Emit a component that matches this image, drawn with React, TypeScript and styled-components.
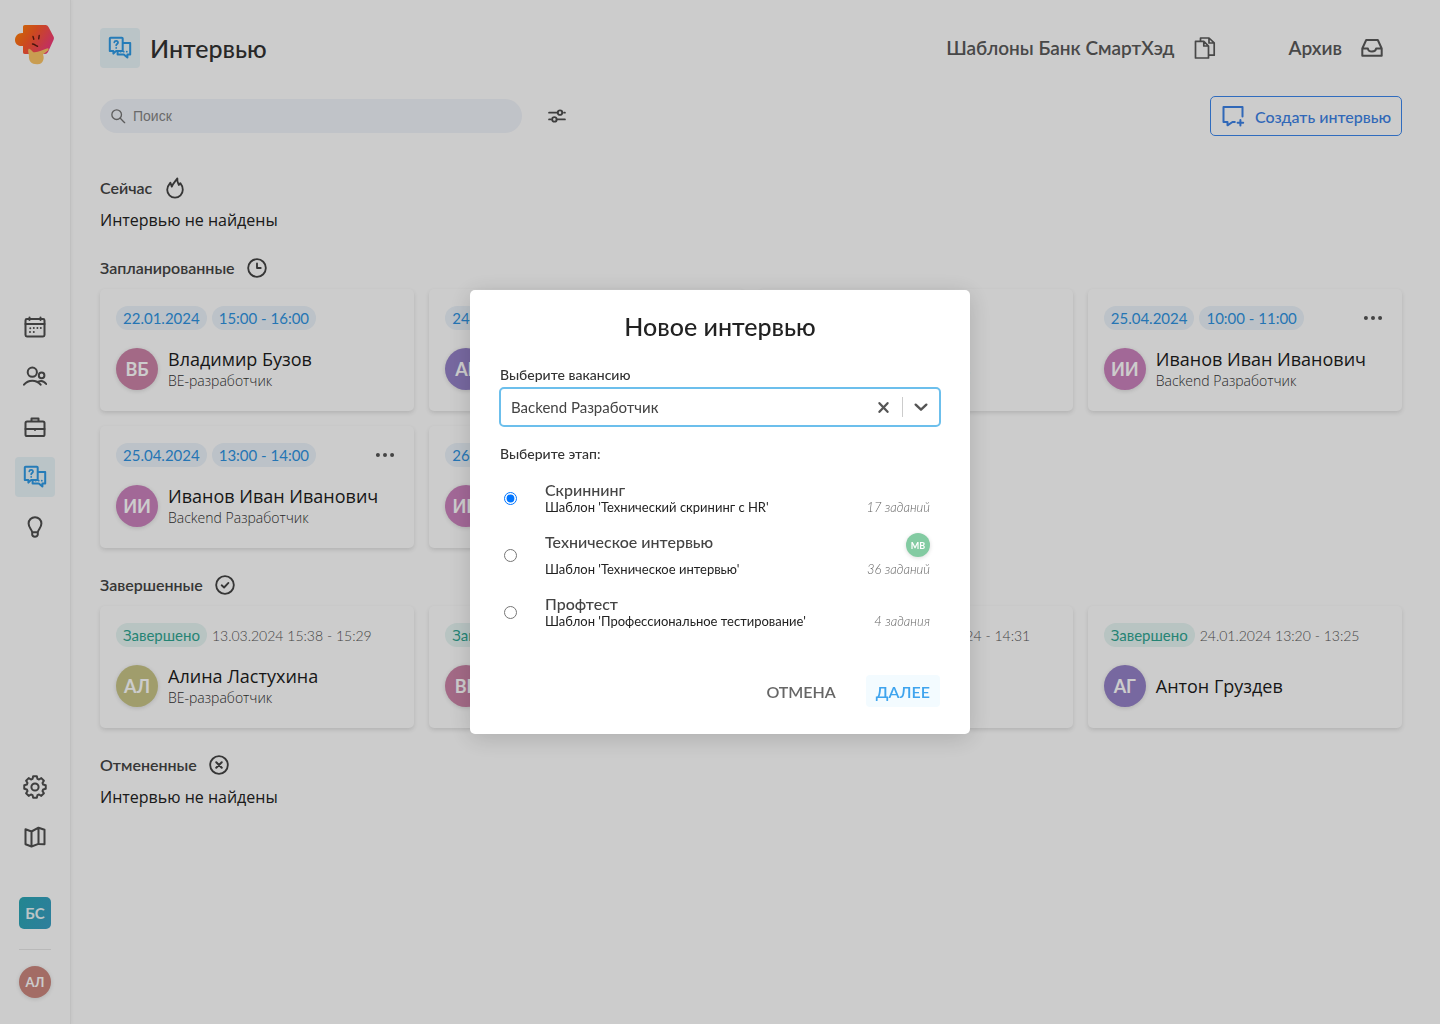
import React from "react";
import styled, { createGlobalStyle } from "styled-components";

const display = '"Lato", "Open Sans", sans-serif';
const text = '"Open Sans", "Noto Sans", sans-serif';

const GlobalStyle = createGlobalStyle`
  *, *::before, *::after { box-sizing: border-box; }
  body { margin: 0; background: #fff; color: #222; font-family: ${display}; }
  button, input, select { font: inherit; color: inherit; }
  button { cursor: pointer; border: 0; background: none; padding: 0; }
  a { color: inherit; text-decoration: none; }
  h1, h2, p { margin: 0; }
  ul { list-style: none; margin: 0; padding: 0; }
`;

/* ---------- icons ---------- */

const Svg = styled.svg<{ $size?: number }>`
  display: block;
  flex: none;
  width: ${(p) => p.$size ?? 24}px;
  height: ${(p) => p.$size ?? 24}px;
  fill: none;
  stroke: currentColor;
  stroke-width: 2;
  stroke-linecap: round;
  stroke-linejoin: round;
`;

type IconProps = { size?: number };

const icon = (children: React.ReactNode) =>
  function Icon({ size }: IconProps) {
    return (
      <Svg viewBox="0 0 24 24" $size={size} aria-hidden="true">
        {children}
      </Svg>
    );
  };

const ChatIcon = icon(
  <>
    <path d="M2.600 1.800h11.300a.8.8 0 0 1 .8.8v12.300H8.200L5.400 17.600v-2.700H1.800V2.600a.8.8 0 0 1 .8-.8z" />
    <path d="M15 7h7.200v11.600h-2.800v3l-3.600-3H9.600v-3" />
    <path d="M6.300 6.300c.3-2.100 3.900-1.900 3.700.3-.1 1.300-1.800 1.400-1.800 2.700" strokeWidth="1.800" />
    <path d="M8.200 11.800v.1M12.600 15.600v.1M15.700 15.600v.1M18.800 15.600v.1" strokeWidth="1.800" />
  </>
);
const CalendarIcon = icon(
  <>
    <rect x="2.500" y="4" width="19" height="17.500" rx="1.400" />
    <path d="M2.500 9h19M6.500 2.500V5M17.500 2.500V5" />
    <path d="M10.800 13v.1M14.400 13v.1M17.800 13v.1M7 17v.1M10.800 17v.1M7.300 13.200v.1" />
  </>
);
const UsersIcon = icon(
  <>
    <circle cx="9.300" cy="7.200" r="4.600" />
    <circle cx="18.600" cy="10.400" r="2.800" />
    <path d="M1 19.600c4.200-5.200 12.400-5.200 16.600 0M15.400 16.600c3-1.400 5.800-.4 7.800 2.400" />
  </>
);
const BriefcaseIcon = icon(
  <>
    <rect x="2.500" y="6.500" width="19" height="14.500" rx="1.600" />
    <path d="M8.500 6V3.600h7V6M2.500 14h19M12 14v1" />
  </>
);
const BulbIcon = icon(
  <path d="M9.200 17.200C8.600 14.400 5.600 12.600 5.600 8.600a6.400 6.400 0 0 1 12.800 0c0 4-3 5.800-3.600 8.600zM9.200 17.200v2.400c0 2.800 5.600 2.800 5.600 0v-2.400" />
);
const MapIcon = icon(
  <path d="M2.500 4.300l6 2.200v15l-6-2.200zM8.500 21.500l7-2.600M8.500 6.500l7-3.800v16.200M15.500 2.700l6 2v14.600l-6-.4" />
);

const gearPath = (() => {
  const points: string[] = [];
  for (let i = 0; i < 8; i++) {
    const base = (i * Math.PI) / 4;
    [
      [-0.29, 8.5],
      [-0.17, 10.9],
      [0.17, 10.9],
      [0.29, 8.5],
    ].forEach(([a, r]) =>
      points.push(`${(12 + r * Math.sin(base + a)).toFixed(2)} ${(12 - r * Math.cos(base + a)).toFixed(2)}`)
    );
  }
  return `M${points.join("L")}Z`;
})();

const GearIcon = icon(
  <>
    <path d={gearPath} />
    <circle cx="12" cy="12" r="3.600" />
  </>
);
const DocsIcon = icon(
  <g strokeWidth="1.700">
    <path d="M2.500 5.300h8.300l4.700 4.700v12h-13zM10.800 5.500V10h4.500" />
    <path d="M7.500 5V2h8.500l5.200 4.800v12.400H16M16 2.200V7h5" />
  </g>
);
const InboxIcon = icon(
  <path d="M6.200 4h11.600l3.900 8.500v7.200H2.300v-7.200zM2.300 12.500h5.600c.4 4 7.800 4 8.200 0h5.600" />
);
const NewChatIcon = icon(
  <path d="M21.500 12.500V3h-19v15h4v3.300l5-3.300h2.300M19.400 16v5.600M16.600 18.800h5.600" />
);
const SearchIcon = icon(
  <>
    <circle cx="10" cy="10" r="7.200" />
    <path d="M15.400 15.400L22 22" />
  </>
);
const SlidersIcon = icon(
  <g strokeWidth="2.600">
    <path d="M1.500 7.500h11M21.500 7.500h1M1.500 16.500h2M12.500 16.500h10" />
    <circle cx="16" cy="7.500" r="3" />
    <circle cx="8.500" cy="16.500" r="3" />
  </g>
);
const FlameIcon = icon(
  <path d="M14.600 1.500c-.6 3.400.6 4.900 1.600 7.200l1.600-2c1.900 2.300 2.700 4.500 2.700 7.300a8.500 8.500 0 0 1-17 0c0-3.200 1.600-5.500 3.500-7.800l1.500 4.300c1.200-3.400 3.600-5.500 6.100-9z" />
);
const ClockIcon = icon(
  <>
    <circle cx="12" cy="12" r="10.600" strokeWidth="2.200" />
    <path d="M12 6.500V12h4.500" strokeWidth="2.200" />
  </>
);
const CheckIcon = icon(
  <>
    <circle cx="12" cy="12" r="10.600" strokeWidth="2.200" />
    <path d="M8 12.300l2.900 2.700 5.200-5.500" strokeWidth="2.200" />
  </>
);
const CrossCircleIcon = icon(
  <>
    <circle cx="12" cy="12" r="10.600" strokeWidth="2.200" />
    <path d="M8.700 8.700l6.600 6.600M15.300 8.700l-6.600 6.600" strokeWidth="2.400" />
  </>
);
const DotsIcon = icon(<path d="M3.500 12v.01M12 12v.01M20.500 12v.01" strokeWidth="4.800" />);
const CloseIcon = icon(<path d="M4.500 4l15 16M19.500 4l-15 16" strokeWidth="4.200" />);
const ChevronIcon = icon(<path d="M4 8.500l8 7.500 8-7.500" strokeWidth="3.600" />);

function Logo() {
  return (
    <svg width="40" height="42" viewBox="0 0 40 42" role="img" aria-label="СмартХэд">
      <defs>
        <linearGradient id="logoBody" x1="0" y1="0" x2="1" y2="0.500">
          <stop offset="0" stopColor="#ff8a00" />
          <stop offset="0.500" stopColor="#ff5b28" />
          <stop offset="1" stopColor="#f23c78" />
        </linearGradient>
      </defs>
      <path
        d="M10 1h20.500c1.500 0 2.200.8 3 2l5 9.500c.6 1.200.6 2.200 0 3.400L33 28c-.8 1.300-1.500 2-3 2H10c-1.600 0-2-.8-2-2.200V22C3.200 22.500 0 20 0 16s3.200-7.500 8-7V3c0-1.300.6-2 2-2z"
        fill="url(#logoBody)"
      />
      <path
        d="M13.500 25c1.500-1 3 2 5 3.200 4.500.6 9-2.600 14-4 1.500 0 1.400 1.800.2 2.600L28 30.500c1.600 3.500.6 9.500-5.500 9.800-6 .2-9-2.800-8.600-9-.5-2-1.200-5.200-.4-6.300z"
        fill="#fcc566"
      />
      <path d="M18 12.500l.8 2.800M24.200 11.500l-.5 3.300M17.500 20c2-.1 3.200 2 5 2.300" fill="none" stroke="#5c1c10" strokeWidth="1.400" strokeLinecap="round" />
    </svg>
  );
}

/* ---------- page frame ---------- */

const Page = styled.div`
  display: flex;
  min-height: 100vh;
`;

const Sidebar = styled.aside`
  display: flex;
  flex-direction: column;
  align-items: center;
  justify-content: space-between;
  flex: none;
  width: 71px;
  height: 100vh;
  padding: 24px 0 26px;
  border-right: 1px solid #f0f0f0;
  box-shadow: 1px 0 3px rgba(0, 0, 0, 0.04);
`;

const LogoLink = styled.a`
  height: 62px;
`;

const NavList = styled.ul`
  display: flex;
  flex-direction: column;
  gap: 10px;
`;

const IconTile = styled.a<{ $active?: boolean }>`
  display: grid;
  place-items: center;
  width: 40px;
  height: 40px;
  border-radius: 4px;
  color: ${(p) => (p.$active ? "#2f9be6" : "#4f4f4f")};
  background: ${(p) => (p.$active ? "#e9f5f9" : "transparent")};
`;

const SidebarFoot = styled.div`
  display: flex;
  flex-direction: column;
  align-items: center;
`;

const Company = styled.button`
  width: 32px;
  height: 32px;
  margin: 40px 0 20px;
  border-radius: 5px;
  background: linear-gradient(110deg, #2ba8b5, #3a9fc4);
  color: #eaf6f8;
  font-size: 15px;
  font-weight: 700;
`;

const Divider = styled.hr`
  width: 32px;
  height: 1px;
  margin: 0 0 16px;
  border: 0;
  background: #e8e8e8;
`;

const Main = styled.main`
  flex: 1;
  min-width: 0;
  padding: 28px 38px 28px 29px;
`;

const Header = styled.header`
  display: flex;
  align-items: center;
  gap: 10px;
`;

const PageTitle = styled.h1`
  flex: 1;
  font-size: 25px;
  line-height: 40px;
  font-weight: 500;
  color: #333;
`;

const HeaderLink = styled.a`
  display: flex;
  align-items: center;
  gap: 18px;
  margin-right: 18px;
  font-size: 19px;
  line-height: 24px;
  font-weight: 600;
  color: #5a5a5a;

  & + & {
    margin-left: 44px;
  }
`;

const Toolbar = styled.div`
  display: flex;
  align-items: center;
  gap: 26px;
  margin: 28px 0 40px;
`;

const Search = styled.label`
  display: flex;
  align-items: center;
  gap: 5px;
  width: 422px;
  height: 34px;
  padding: 0 10px;
  border-radius: 17px;
  background: #f1f4fa;
  color: #757575;
`;

const SearchInput = styled.input`
  flex: 1;
  min-width: 0;
  border: 0;
  outline: 0;
  background: none;
  font-family: "Liberation Sans", Arial, sans-serif;
  font-size: 14px;

  &::placeholder {
    color: #858585;
  }
`;

const FilterButton = styled.button`
  color: #4f4f4f;
`;

const CreateButton = styled.button`
  display: flex;
  align-items: center;
  gap: 10px;
  height: 40px;
  margin-left: auto;
  padding: 0 10px;
  border: 1px solid #3d88ee;
  border-radius: 5px;
  color: #3d82e6;
  font-size: 16px;
  font-weight: 500;
`;

/* ---------- interview sections ---------- */

const Section = styled.section`
  & + & {
    margin-top: 25px;
  }
`;

const SectionTitle = styled.h2`
  display: flex;
  align-items: center;
  gap: 12px;
  margin-bottom: 9px;
  font-size: 16px;
  line-height: 24px;
  font-weight: 600;
  color: #444;
`;

const Empty = styled.p`
  font-family: ${text};
  font-size: 16px;
  line-height: 22px;
`;

const Grid = styled.ul`
  display: grid;
  grid-template-columns: repeat(4, minmax(0, 1fr));
  gap: 15px;
`;

const Card = styled.li`
  height: 122px;
  padding: 17px 16px;
  border-radius: 5px;
  box-shadow: 0 2px 4px rgba(0, 0, 0, 0.12);
`;

const CardTop = styled.div`
  display: flex;
  align-items: center;
  gap: 5px;
  height: 24px;
`;

const Pill = styled.span<{ $done?: boolean }>`
  padding: 0 7px;
  border-radius: 12px;
  font-size: 15px;
  line-height: 24px;
  white-space: nowrap;
  color: ${(p) => (p.$done ? "#2fa592" : "#2f93e2")};
  background: ${(p) => (p.$done ? "#e6f5f3" : "#ebf3fa")};
`;

const DoneTime = styled.span`
  font-size: 14px;
  font-weight: 300;
  white-space: nowrap;
  color: #555;
`;

const MenuButton = styled.button`
  margin-left: auto;
  padding-right: 3px;
  color: #555;
`;

const Person = styled.div`
  display: flex;
  align-items: center;
  gap: 10px;
  height: 44px;
  margin-top: 17px;
`;

const Avatar = styled.span<{ $color: string; $size: number; $font: number }>`
  display: grid;
  place-items: center;
  flex: none;
  width: ${(p) => p.$size}px;
  height: ${(p) => p.$size}px;
  border-radius: 50%;
  background: ${(p) => p.$color};
  box-shadow: 0 1px 4px rgba(0, 0, 0, 0.14);
  color: #fff;
  font-size: ${(p) => p.$font}px;
  font-weight: 700;
`;

const PersonText = styled.div`
  min-width: 0;
  font-family: ${text};
  white-space: nowrap;
`;

const PersonName = styled.p`
  font-size: 18px;
  line-height: 24px;
  color: #1c1c1c;
`;

const PersonRole = styled.p`
  font-size: 14px;
  line-height: 20px;
  font-weight: 300;
  color: #333;
`;

/* ---------- dialog ---------- */

const Backdrop = styled.div`
  position: fixed;
  inset: 0;
  display: grid;
  place-items: center;
  background: rgba(0, 0, 0, 0.2);
`;

const Dialog = styled.form`
  width: 500px;
  max-width: 100%;
  padding: 20px 30px 27px;
  border-radius: 5px;
  background: #fff;
  box-shadow: 0 4px 24px rgba(0, 0, 0, 0.16);
`;

const DialogTitle = styled.h2`
  margin-bottom: 24px;
  font-size: 25px;
  line-height: 32px;
  font-weight: 500;
  text-align: center;
  color: #222;
`;

const FieldLabel = styled.label`
  display: block;
  font-size: 14px;
  line-height: 18px;
  font-weight: 500;
  color: #333;
`;

const SelectBox = styled.div`
  display: flex;
  align-items: center;
  height: 40px;
  margin: 3px -1px 18px;
  padding: 0 10px;
  border: 2px solid #6cbfec;
  border-radius: 5px;
  color: #555;
`;

const Select = styled.select`
  flex: 1;
  min-width: 0;
  height: 100%;
  padding: 0;
  border: 0;
  outline: 0;
  appearance: none;
  background: none;
  font-size: 15px;
  color: #444;
`;

const Separator = styled.span`
  width: 1px;
  height: 20px;
  margin: 0 10px 0 12px;
  background: #ccc;
`;

const Stages = styled.fieldset`
  margin: 0 0 37px;
  padding: 0;
  border: 0;
`;

const StagesLegend = styled.legend`
  margin-bottom: 9px;
  padding: 0;
  font-size: 14px;
  line-height: 18px;
  font-weight: 500;
  color: #333;
`;

const Stage = styled.label`
  display: flex;
  align-items: center;
  padding: 9px 10px 9px 4px;
`;

const Radio = styled.input`
  flex: none;
  width: 13px;
  height: 13px;
  margin: 0 28px 0 0;
`;

const StageText = styled.span`
  display: flex;
  flex: 1;
  flex-direction: column;
  align-self: stretch;
  justify-content: space-between;
`;

const StageName = styled.span`
  font-size: 16px;
  line-height: 18px;
  font-weight: 500;
  color: #444;
`;

const StageTemplate = styled.span`
  font-size: 13px;
  line-height: 16px;
  color: #222;
`;

const StageSide = styled.span`
  display: flex;
  flex-direction: column;
  align-items: flex-end;
  align-self: stretch;
  justify-content: flex-end;
  gap: 4px;
`;

const TaskCount = styled.span`
  font-size: 13px;
  line-height: 16px;
  font-style: italic;
  font-weight: 300;
  color: #666;
`;

const Actions = styled.div`
  display: flex;
  justify-content: flex-end;
  gap: 20px;
`;

const ActionButton = styled.button<{ $primary?: boolean }>`
  height: 32px;
  padding: 0 10px;
  border-radius: 4px;
  font-size: 16px;
  font-weight: 600;
  color: ${(p) => (p.$primary ? "#3fa4ee" : "#666")};
  background: ${(p) => (p.$primary ? "#f3fbff" : "transparent")};
`;

/* ---------- data ---------- */

type Interview = {
  date: string;
  time: string;
  initials: string;
  color: string;
  name: string;
  role?: string;
  done?: boolean;
  menu?: boolean;
};

const PINK = "#cc84a8";
const PURPLE = "#9582c8";
const ORCHID = "#cb82bd";
const OLIVE = "#c8c587";

const planned: Interview[] = [
  { date: "22.01.2024", time: "15:00 - 16:00", initials: "ВБ", color: PINK, name: "Владимир Бузов", role: "BE-разработчик" },
  { date: "24.01.2024", time: "12:00 - 13:00", initials: "АГ", color: PURPLE, name: "Антон Груздев" },
  { date: "24.01.2024", time: "8:00 - 9:00", initials: "ВБ", color: PINK, name: "Владимир Бузов" },
  { date: "25.04.2024", time: "10:00 - 11:00", initials: "ИИ", color: ORCHID, name: "Иванов Иван Иванович", role: "Backend Разработчик", menu: true },
  { date: "25.04.2024", time: "13:00 - 14:00", initials: "ИИ", color: ORCHID, name: "Иванов Иван Иванович", role: "Backend Разработчик", menu: true },
  { date: "26.04.2024", time: "10:00 - 11:00", initials: "ИИ", color: ORCHID, name: "Иванов Иван Иванович", role: "Backend Разработчик", menu: true },
];

const finished: Interview[] = [
  { done: true, date: "13.03.2024", time: "15:38 - 15:29", initials: "АЛ", color: OLIVE, name: "Алина Ластухина", role: "BE-разработчик" },
  { done: true, date: "22.01.2024", time: "15:10 - 15:40", initials: "ВБ", color: PINK, name: "Владимир Бузов", role: "BE-разработчик" },
  { done: true, date: "24.01.2024", time: "14:24 - 14:31", initials: "АГ", color: PURPLE, name: "Антон Груздев" },
  { done: true, date: "24.01.2024", time: "13:20 - 13:25", initials: "АГ", color: PURPLE, name: "Антон Груздев" },
];

const stages = [
  { name: "Скриннинг", template: "Технический скрининг с HR", count: "17 заданий" },
  { name: "Техническое интервью", template: "Техническое интервью", count: "36 заданий", owner: "МВ" },
  { name: "Профтест", template: "Профессиональное тестирование", count: "4 задания" },
];

type NavItem = { label: string; Icon: React.ComponentType<IconProps>; active?: boolean };

const navItems: NavItem[] = [
  { label: "Календарь", Icon: CalendarIcon },
  { label: "Кандидаты", Icon: UsersIcon },
  { label: "Вакансии", Icon: BriefcaseIcon },
  { label: "Интервью", Icon: ChatIcon, active: true },
  { label: "Идеи", Icon: BulbIcon },
];

const footItems: NavItem[] = [
  { label: "Настройки", Icon: GearIcon },
  { label: "Карта", Icon: MapIcon },
];

function InterviewCard({ item }: { item: Interview }) {
  return (
    <Card>
      <CardTop>
        {item.done ? (
          <>
            <Pill $done>Завершено</Pill>
            <DoneTime>
              {item.date} {item.time}
            </DoneTime>
          </>
        ) : (
          <>
            <Pill>{item.date}</Pill>
            <Pill>{item.time}</Pill>
          </>
        )}
        {item.menu && (
          <MenuButton type="button" aria-label="Действия">
            <DotsIcon size={20} />
          </MenuButton>
        )}
      </CardTop>
      <Person>
        <Avatar $color={item.color} $size={42} $font={18}>
          {item.initials}
        </Avatar>
        <PersonText>
          <PersonName>{item.name}</PersonName>
          {item.role && <PersonRole>{item.role}</PersonRole>}
        </PersonText>
      </Person>
    </Card>
  );
}

function CardGrid({ items }: { items: Interview[] }) {
  return (
    <Grid>
      {items.map((item, i) => (
        <InterviewCard key={i} item={item} />
      ))}
    </Grid>
  );
}

function NavItems({ items }: { items: NavItem[] }) {
  return (
    <NavList>
      {items.map(({ label, Icon, active }) => (
        <li key={label}>
          <IconTile href="#" aria-label={label} $active={active}>
            <Icon size={24} />
          </IconTile>
        </li>
      ))}
    </NavList>
  );
}

export default function App() {
  return (
    <>
      <GlobalStyle />
      <Page>
        <Sidebar>
          <LogoLink href="#" aria-label="На главную">
            <Logo />
          </LogoLink>
          <nav>
            <NavItems items={navItems} />
          </nav>
          <SidebarFoot>
            <NavItems items={footItems} />
            <Company type="button">БС</Company>
            <Divider />
            <Avatar $color="#cc887f" $size={32} $font={13}>
              АЛ
            </Avatar>
          </SidebarFoot>
        </Sidebar>

        <Main>
          <Header>
            <IconTile as="span" $active>
              <ChatIcon size={24} />
            </IconTile>
            <PageTitle>Интервью</PageTitle>
            <HeaderLink href="#">
              Шаблоны Банк СмартХэд
              <DocsIcon size={24} />
            </HeaderLink>
            <HeaderLink href="#">
              Архив
              <InboxIcon size={24} />
            </HeaderLink>
          </Header>

          <Toolbar>
            <Search>
              <SearchIcon size={16} />
              <SearchInput type="search" placeholder="Поиск" aria-label="Поиск" />
            </Search>
            <FilterButton type="button" aria-label="Фильтры">
              <SlidersIcon size={18} />
            </FilterButton>
            <CreateButton type="button">
              <NewChatIcon size={24} />
              Создать интервью
            </CreateButton>
          </Toolbar>

          <Section>
            <SectionTitle>
              Сейчас <FlameIcon size={22} />
            </SectionTitle>
            <Empty>Интервью не найдены</Empty>
          </Section>
          <Section>
            <SectionTitle>
              Запланированные <ClockIcon size={20} />
            </SectionTitle>
            <CardGrid items={planned} />
          </Section>
          <Section>
            <SectionTitle>
              Завершенные <CheckIcon size={20} />
            </SectionTitle>
            <CardGrid items={finished} />
          </Section>
          <Section>
            <SectionTitle>
              Отмененные <CrossCircleIcon size={20} />
            </SectionTitle>
            <Empty>Интервью не найдены</Empty>
          </Section>
        </Main>
      </Page>

      <Backdrop>
        <Dialog role="dialog" aria-modal="true" aria-labelledby="dialog-title" onSubmit={(e) => e.preventDefault()}>
          <DialogTitle id="dialog-title">Новое интервью</DialogTitle>
          <FieldLabel htmlFor="vacancy">Выберите вакансию</FieldLabel>
          <SelectBox>
            <Select id="vacancy" defaultValue="backend">
              <option value="backend">Backend Разработчик</option>
            </Select>
            <button type="button" aria-label="Очистить">
              <CloseIcon size={13} />
            </button>
            <Separator />
            <ChevronIcon size={16} />
          </SelectBox>
          <Stages>
            <StagesLegend>Выберите этап:</StagesLegend>
            {stages.map((stage, i) => (
              <Stage key={stage.name}>
                <Radio type="radio" name="stage" defaultChecked={i === 0} />
                <StageText>
                  <StageName>{stage.name}</StageName>
                  <StageTemplate>Шаблон '{stage.template}'</StageTemplate>
                </StageText>
                <StageSide>
                  {stage.owner && (
                    <Avatar $color="#83cba2" $size={24} $font={9}>
                      {stage.owner}
                    </Avatar>
                  )}
                  <TaskCount>{stage.count}</TaskCount>
                </StageSide>
              </Stage>
            ))}
          </Stages>
          <Actions>
            <ActionButton type="button">ОТМЕНА</ActionButton>
            <ActionButton type="submit" $primary>
              ДАЛЕЕ
            </ActionButton>
          </Actions>
        </Dialog>
      </Backdrop>
    </>
  );
}
